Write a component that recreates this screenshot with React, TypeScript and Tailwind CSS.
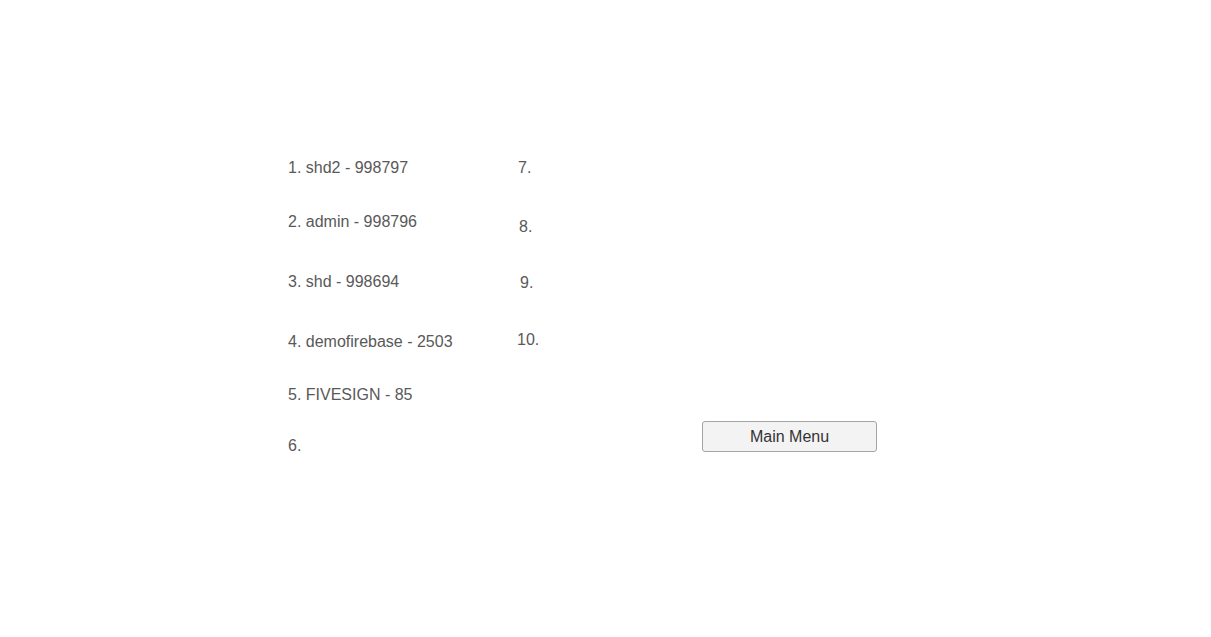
export default function App() {
  const left = [
    { t: "1. shd2 - 998797", c: "" },
    { t: "2. admin - 998796", c: "mt-[34px]" },
    { t: "3. shd - 998694", c: "mt-[40px]" },
    { t: "4. demofirebase - 2503", c: "mt-[40px]" },
    { t: "5. FIVESIGN - 85", c: "mt-[33px]" },
    { t: "6.", c: "mt-[31px]" },
  ];
  const right = [
    { t: "7.", c: "" },
    { t: "8.", c: "mt-[39px] pl-[1px]" },
    { t: "9.", c: "mt-[36px] pl-[2px]" },
    { t: "10.", c: "mt-[37px] -ml-[1px]" },
  ];
  return (
    <div
      className="w-[1211px] h-[637px] bg-white flex pl-[288px] pt-[158px] text-[#595959]"
      style={{ fontFamily: '"Liberation Sans", Arial, sans-serif' }}
    >
      <div className="w-[230px] flex flex-col">
        {left.map((i) => (
          <div key={i.t} className={"h-[20px] leading-[20px] text-[16px] " + i.c}>
            {i.t}
          </div>
        ))}
      </div>
      <div className="w-[184px] flex flex-col">
        {right.map((i) => (
          <div key={i.t} className={"h-[20px] leading-[20px] text-[16px] " + i.c}>
            {i.t}
          </div>
        ))}
      </div>
      <div className="pt-[263px]">
        <button className="w-[175px] h-[31px] bg-[#f3f3f3] border border-[#a5a5a5] rounded-[3px] text-[16px] text-[#333333] flex items-center justify-center">
          Main Menu
        </button>
      </div>
    </div>
  );
}
